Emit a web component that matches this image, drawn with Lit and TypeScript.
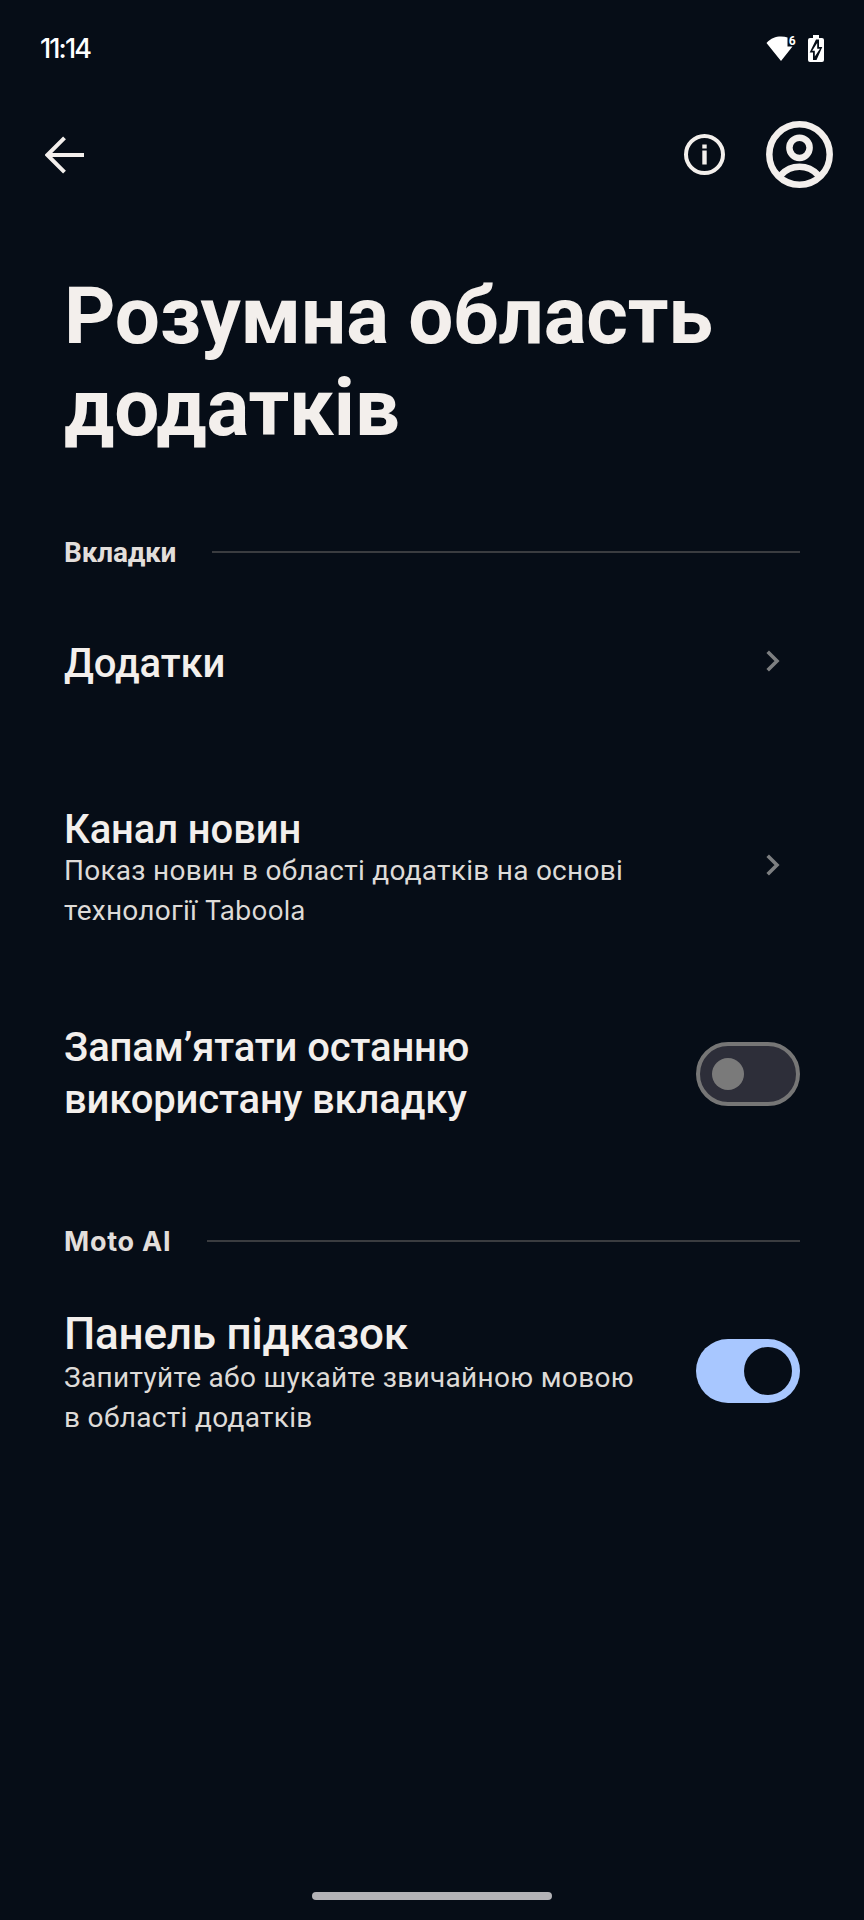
import { LitElement, html, css } from "lit";
import { customElement, property } from "lit/decorators.js";

@customElement("section-header")
class SectionHeader extends LitElement {
  static styles = css`
    :host { display: flex; align-items: center; height: 40px; }
    .rule { flex: 1; height: 2px; background: #3a3c40; }
    .label { padding-top: 2px; font-size: 28px; line-height: 40px; font-weight: 700; letter-spacing: -0.2px; color: #e2dedb; }
  `;
  render() {
    return html`<span class="label"><slot></slot></span><span class="rule"></span>`;
  }
}

@customElement("toggle-switch")
class ToggleSwitch extends LitElement {
  @property({ type: Boolean }) on = false;
  static styles = css`
    .track { box-sizing: border-box; width: 104px; height: 64px; border-radius: 32px; display: flex; align-items: center; }
    .off { background: #2d2e39; border: 4px solid #767676; padding-left: 12px; }
    .on { background: #a8c7ff; justify-content: flex-end; padding-right: 8px; }
    .knob { border-radius: 50%; }
    .off .knob { width: 32px; height: 32px; background: #7a7a7a; }
    .on .knob { width: 48px; height: 48px; background: #060d17; }
  `;
  render() {
    return html`<div class="track ${this.on ? "on" : "off"}"><div class="knob"></div></div>`;
  }
}

@customElement("app-root")
class AppRoot extends LitElement {
  static styles = css`
    :host { display: block; }
    .screen { box-sizing: border-box; width: 864px; height: 1920px; background: #060d17; color: #f3efec; font-family: Roboto, sans-serif; display: flex; flex-direction: column; overflow: hidden; }
    svg { display: block; }
    .status { height: 96px; box-sizing: border-box; padding: 0 40px 0 40px; display: flex; justify-content: space-between; align-items: center; }
    .clock { font-family: Inter, sans-serif; font-size: 27px; font-weight: 450; letter-spacing: -1.9px; color: #fff; }
    .icons { display: flex; gap: 12px; align-items: center; }
    .bar { height: 117px; box-sizing: border-box; display: flex; align-items: center; padding: 0 31px 0 45px; }
    .spacer { flex: 1; }
    .person { margin-left: 41px; }
    .content { flex: 1; display: flex; flex-direction: column; padding: 57px 64px 0 64px; }
    h1 { margin: 0; font-size: 80px; line-height: 92px; font-weight: 700; letter-spacing: -0.25px; }
    .row { display: flex; justify-content: space-between; align-items: center; }
    .name { padding-top: 1px; font-size: 40px; line-height: 52px; font-weight: 500; letter-spacing: -0.12px; }
    .big { font-size: 44px; letter-spacing: -0.22px; }
    .desc { margin-top: -5px; font-size: 28px; line-height: 40px; letter-spacing: 0.26px; color: #dedbd8; }
    .big + .desc { margin-top: -2px; letter-spacing: 0.32px; }
    .chev { margin: 0 20px 5px 0; }
    .latin { font-family: Inter, sans-serif; font-size: 26.5px; line-height: 0; }
    .ai { font-size: 27px; letter-spacing: 0.75px; }
    .home { height: 28px; display: flex; justify-content: center; }
    .pill { width: 240px; height: 8px; border-radius: 4px; background: #b3b3b7; }
    .tabs { margin-top: 78px; }
    .apps { margin-top: 65px; }
    .news { margin-top: 113px; }
    .last { margin-top: 90px; }
    .moto { margin-top: 95px; }
    .panel { margin-top: 46px; }
    .panel toggle-switch { margin-bottom: 4px; }
    .t1 { margin-right: 36px; }
  `;
  chevron() {
    return html`<svg class="chev" width="14" height="22" viewBox="0 0 14 22"><path d="M1.7 1.7 11 11 1.7 20.3" fill="none" stroke="#7d7f81" stroke-width="3.6"/></svg>`;
  }
  render() {
    return html`<div class="screen">
      <div class="status">
        <span class="clock">11:14</span>
        <div class="icons">
          <svg width="30" height="27" viewBox="0 0 30 27"><path d="M0.500 8C5 3 9.500 1.500 15 1.500Q19 1.500 21.500 2.500V11.500H26.500L15 26Z" fill="#fff"/><text x="22.800" y="10" font-size="12" font-weight="700" font-family="Roboto" fill="#fff">6</text></svg>
          <svg width="16" height="27" viewBox="0 0 16 27"><path d="M5 0H11V3H14Q16 3 16 5V25Q16 27 14 27H2Q0 27 0 25V5Q0 3 2 3H5Z" fill="#fff"/><path d="M11 4.500V12H14.300L8.500 25H5V17.500H1.700L8 4.500Z" fill="#060d17"/><path d="M9.200 8V13.800H12L6.800 21.500V15.800H4.200Z" fill="#fff"/></svg>
        </div>
      </div>
      <div class="bar">
        <svg width="40" height="38" viewBox="0 0 40 38"><path d="M39 19H3M19.500 1.800 2.300 19 19.500 36.200" fill="none" stroke="#f3efec" stroke-width="4"/></svg>
        <span class="spacer"></span>
        <svg width="41" height="41" viewBox="0 0 41 41"><circle cx="20.500" cy="20.500" r="18.500" fill="none" stroke="#f3efec" stroke-width="4"/><path d="M18.300 10.500h4.400v4h-4.400zM18.300 16.500h4.400v14h-4.400z" fill="#f3efec"/></svg>
        <svg class="person" width="67" height="67" viewBox="0 0 67 67" fill="none" stroke="#f3efec" stroke-width="6.500"><circle cx="33.500" cy="33.500" r="30.200"/><circle cx="33.500" cy="26.800" r="10.100"/><path d="M15 54C25 43 42 43 52 54"/></svg>
      </div>
      <div class="content">
        <h1>Розумна область<br>додатків</h1>
        <section-header class="tabs"><span class="t1">Вкладки</span></section-header>
        <div class="row apps"><div class="name">Додатки</div>${this.chevron()}</div>
        <div class="row news"><div><div class="name">Канал новин</div><div class="desc">Показ новин в області додатків на основі<br>технології <span class="latin">Taboola</span></div></div>${this.chevron()}</div>
        <div class="row last"><div class="name">Запам’ятати останню<br>використану вкладку</div><toggle-switch></toggle-switch></div>
        <section-header class="moto"><span class="t1 latin ai">Moto AI</span></section-header>
        <div class="row panel"><div><div class="name big">Панель підказок</div><div class="desc">Запитуйте або шукайте звичайною мовою<br>в області додатків</div></div><toggle-switch on></toggle-switch></div>
      </div>
      <div class="home"><div class="pill"></div></div>
    </div>`;
  }
}
